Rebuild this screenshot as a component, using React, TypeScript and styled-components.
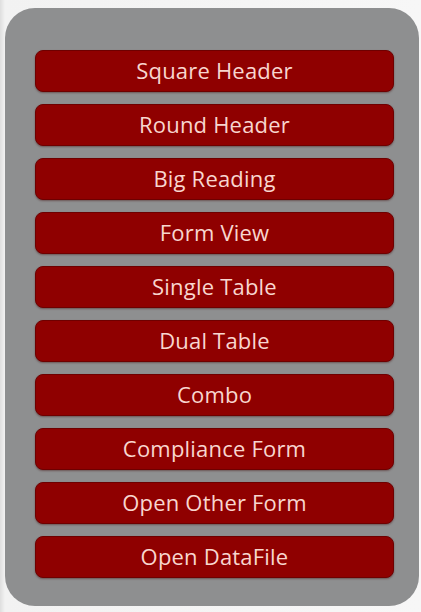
import React from "react";
import styled, { createGlobalStyle } from "styled-components";

const Global = createGlobalStyle`
  html, body { margin: 0; padding: 0; background: #ececec; }
  body { font-family: "Open Sans", "Noto Sans", sans-serif; }
`;

const Page = styled.div`
  width: 421px;
  height: 612px;
  box-sizing: border-box;
  padding: 8px 2px 6px 5px;
  background: linear-gradient(to right, #dedede 0px, #f2f2f2 5px, #f7f7f7 100%);
`;

const Panel = styled.div`
  height: 100%;
  box-sizing: border-box;
  background: #8e8f90;
  border-radius: 30px;
  padding: 42px 25px 0 30px;
  display: flex;
  flex-direction: column;
  gap: 12px;
`;

const MenuButton = styled.button`
  height: 42px;
  width: 100%;
  box-sizing: border-box;
  border: 1px solid #6e0000;
  border-radius: 8px;
  background: #8f0000;
  color: #f8d6cf;
  font-family: "Open Sans", "Noto Sans", sans-serif;
  font-size: 22px;
  font-weight: 500;
  letter-spacing: 0.2px;
  padding: 0 0 2px;
  display: flex;
  align-items: center;
  justify-content: center;
  box-shadow: 0 1px 2px rgba(60, 0, 0, 0.4);
  cursor: pointer;
`;

const items = [
  "Square Header",
  "Round Header",
  "Big Reading",
  "Form View",
  "Single Table",
  "Dual Table",
  "Combo",
  "Compliance Form",
  "Open Other Form",
  "Open DataFile",
];

export default function App() {
  return (
    <>
      <Global />
      <Page>
        <Panel>
          {items.map((t) => (
            <MenuButton key={t}>{t}</MenuButton>
          ))}
        </Panel>
      </Page>
    </>
  );
}
